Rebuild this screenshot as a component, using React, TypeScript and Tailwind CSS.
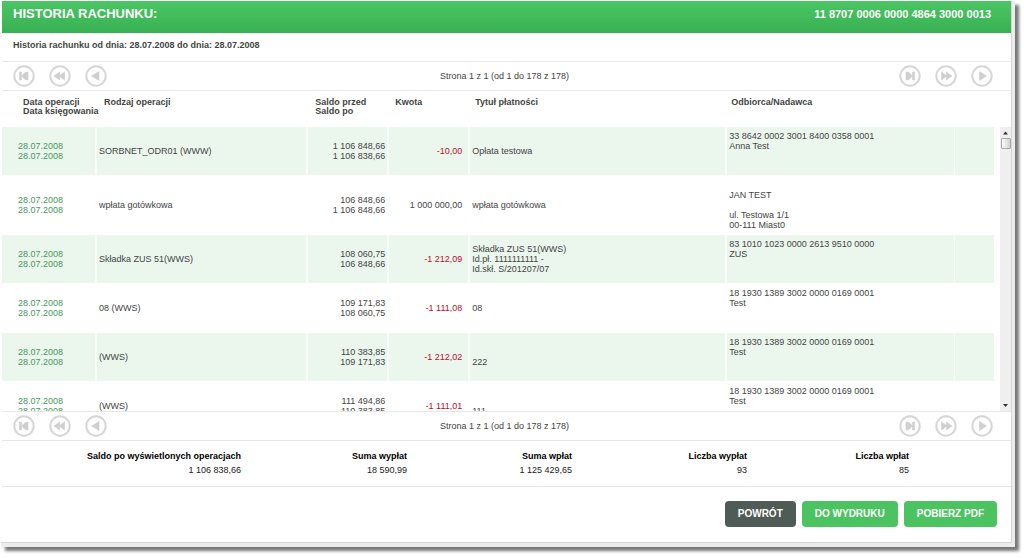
import React from 'react';

interface Operation {
  id: number;
  dates: [string, string];
  type: string;
  balances: [string, string];
  amount: string;
  title: string[];
  party: string[];
}

const operations: Operation[] = [
  {
    id: 1,
    dates: ['28.07.2008', '28.07.2008'],
    type: 'SORBNET_ODR01 (WWW)',
    balances: ['1 106 848,66', '1 106 838,66'],
    amount: '-10,00',
    title: ['Opłata testowa'],
    party: ['33 8642 0002 3001 8400 0358 0001', 'Anna Test'],
  },
  {
    id: 2,
    dates: ['28.07.2008', '28.07.2008'],
    type: 'wpłata gotówkowa',
    balances: ['106 848,66', '1 106 848,66'],
    amount: '1 000 000,00',
    title: ['wpłata gotówkowa'],
    party: ['', 'JAN TEST', '', 'ul. Testowa 1/1', '00-111 Miast0'],
  },
  {
    id: 3,
    dates: ['28.07.2008', '28.07.2008'],
    type: 'Składka ZUS 51(WWS)',
    balances: ['108 060,75', '106 848,66'],
    amount: '-1 212,09',
    title: ['Składka ZUS 51(WWS)', 'Id.pł. 1111111111 -', 'Id.skł. S/201207/07'],
    party: ['83 1010 1023 0000 2613 9510 0000', 'ZUS'],
  },
  {
    id: 4,
    dates: ['28.07.2008', '28.07.2008'],
    type: '08 (WWS)',
    balances: ['109 171,83', '108 060,75'],
    amount: '-1 111,08',
    title: ['08'],
    party: ['18 1930 1389 3002 0000 0169 0001', 'Test'],
  },
  {
    id: 5,
    dates: ['28.07.2008', '28.07.2008'],
    type: '(WWS)',
    balances: ['110 383,85', '109 171,83'],
    amount: '-1 212,02',
    title: ['', '222'],
    party: ['18 1930 1389 3002 0000 0169 0001', 'Test'],
  },
  {
    id: 6,
    dates: ['28.07.2008', '28.07.2008'],
    type: '(WWS)',
    balances: ['111 494,86', '110 383,85'],
    amount: '-1 111,01',
    title: ['', '111'],
    party: ['18 1930 1389 3002 0000 0169 0001', 'Test'],
  },
];

const totals = [
  { label: 'Saldo po wyświetlonych operacjach', value: '1 106 838,66' },
  { label: 'Suma wypłat', value: '18 590,99' },
  { label: 'Suma wpłat', value: '1 125 429,65' },
  { label: 'Liczba wypłat', value: '93' },
  { label: 'Liczba wpłat', value: '85' },
];

// Glyphs inside the 22x22 round pager buttons
const pagerShapes = {
  first: 'M6.500 7h2v8h-2zM8.500 11l3.500-3.500 3-.5v8l-3-.5z',
  rewind: 'M5 11l5.500-4v8zM10 11l5.500-4v8z',
  prev: 'M6.500 11l7.500-4.500v9z',
  last: 'M13.500 7h2v8h-2zM13.500 11l-3.500-3.500-3-.5v8l3-.5z',
  forward: 'M12 11l-5.500-4v8zM17 11l-5.500-4v8z',
  next: 'M15.500 11l-7-4.500v9z',
};

const PagerButton: React.FC<{ shape: keyof typeof pagerShapes; label: string }> = ({ shape, label }) => (
  <button type="button" aria-label={label} className="block cursor-pointer">
    <svg width="22" height="22" viewBox="0 0 22 22">
      <circle cx="11" cy="11" r="9.700" fill="none" stroke="#d6d6d6" strokeWidth="2" />
      <path d={pagerShapes[shape]} fill="#cfcfcf" stroke="#cfcfcf" strokeWidth="0.600" strokeLinejoin="round" />
    </svg>
  </button>
);

const Pager: React.FC = () => (
  <nav className="grid grid-cols-[1fr_auto_1fr] items-center h-7 pl-[11px] pr-[18px]">
    <div className="flex gap-[14px]">
      <PagerButton shape="first" label="Pierwsza strona" />
      <PagerButton shape="rewind" label="Przewiń wstecz" />
      <PagerButton shape="prev" label="Poprzednia strona" />
    </div>
    <span className="pl-[3px]">Strona 1 z 1 (od 1 do 178 z 178)</span>
    <div className="flex gap-[14px] justify-end">
      <PagerButton shape="last" label="Ostatnia strona" />
      <PagerButton shape="forward" label="Przewiń naprzód" />
      <PagerButton shape="next" label="Następna strona" />
    </div>
  </nav>
);

const Lines: React.FC<{ items: string[] }> = ({ items }) => (
  <>
    {items.map((line, i) => (
      <div key={i} className="min-h-[10px]">{line}</div>
    ))}
  </>
);

const OperationRow: React.FC<{ op: Operation }> = ({ op }) => {
  const amountColor = op.amount.startsWith('-') ? 'text-[#c00c2e]' : '';

  return (
    <tr className="h-[49px] odd:bg-[#ebf7ed] whitespace-nowrap *:border-b *:border-b-white *:border-l-white/60">
      <td className="pl-4 text-[#479a5f]"><Lines items={op.dates} /></td>
      <td className="border-l-2 pl-[2px]">{op.type}</td>
      <td className="border-l-2 pr-[2px] text-right"><Lines items={op.balances} /></td>
      <td className={`border-l-2 pr-[6px] text-right ${amountColor}`}>{op.amount}</td>
      <td className="border-l-2 pl-[2px]"><Lines items={op.title} /></td>
      <td className="border-l-2 pl-[2px] py-1 align-top"><Lines items={op.party} /></td>
      <td className="border-l"></td>
    </tr>
  );
};

// Classic desktop scrollbar next to the list
const ScrollRail: React.FC = () => (
  <div className="w-[11px] mt-9 bg-[#f0eff0] flex flex-col items-center">
    <svg width="11" height="11" viewBox="0 0 11 11">
      <path d="M5.500 4.500l2.500 3h-5z" fill="#333" />
    </svg>
    <div className="w-[10px] h-[11px] border border-[#a8a8a8] rounded-[1px] bg-linear-to-r from-white to-[#cfcfcf]"></div>
    <svg width="11" height="11" viewBox="0 0 11 11" className="mt-auto">
      <path d="M5.500 7l2.500-3h-5z" fill="#333" />
    </svg>
  </div>
);

export default function App() {
  return (
    <div className="min-h-screen bg-white pl-[1px] pt-[1px] pr-[9px] pb-[11px] font-['Liberation_Sans',Arial,sans-serif] text-[9px] leading-[10px] text-[#444]">
      <div className="bg-white border-r-3 border-b-4 border-[#ececec] shadow-[4px_4px_3px_#777]">
        <div className="pl-[1px] border-r border-b border-[#d6d6d6]">
          <header className="flex justify-between h-8 pt-[6px] pl-[11px] pr-5 bg-linear-to-b from-[#4bc663] to-[#38b054] text-white font-bold leading-[14px]">
            <h1 className="text-[13px]">HISTORIA RACHUNKU:</h1>
            <span className="text-[11px]">11 8707 0006 0000 4864 3000 0013</span>
          </header>

          <p className="h-7 pt-[7px] pl-[11px] font-bold">
            Historia rachunku od dnia: 28.07.2008 do dnia: 28.07.2008
          </p>

          <div className="border-y border-[#e8e8e8]">
            <Pager />
          </div>

          <div className="flex h-[320px] overflow-hidden">
            <div className="flex-1 mr-[6px] overflow-hidden">
              <table className="w-full table-fixed border-separate border-spacing-0">
                <colgroup>
                  <col className="w-[93px]" />
                  <col className="w-[21.3%]" />
                  <col className="w-[81px]" />
                  <col className="w-[81px]" />
                  <col className="w-[25.9%]" />
                  <col />
                  <col className="w-10" />
                </colgroup>
                <thead>
                  <tr className="h-9 text-left align-top leading-[9px] whitespace-nowrap *:pt-[7px]">
                    <th className="pl-[21px]">Data operacji<br />Data księgowania</th>
                    <th className="pl-[9px]">Rodzaj operacji</th>
                    <th className="pl-[9px]">Saldo przed<br />Saldo po</th>
                    <th className="pl-[8px]">Kwota</th>
                    <th className="pl-[7px]">Tytuł płatności</th>
                    <th className="pl-[6px]">Odbiorca/Nadawca</th>
                    <th></th>
                  </tr>
                </thead>
                <tbody>
                  {operations.map((op) => (
                    <OperationRow key={op.id} op={op} />
                  ))}
                </tbody>
              </table>
            </div>
            <ScrollRail />
          </div>

          <div className="border-y border-[#e8e8e8]">
            <Pager />
          </div>

          <dl className="grid grid-cols-[239fr_166fr_165fr_175fr_162fr_102fr] pt-[10px] pb-[11px] text-right text-[#222] border-b border-[#e8e8e8]">
            {totals.map((total) => (
              <div key={total.label}>
                <dt className="font-bold text-black">{total.label}</dt>
                <dd className="mt-1">{total.value}</dd>
              </div>
            ))}
          </dl>

          <div className="flex justify-end gap-[6px] pt-[14px] pr-[14px] pb-[15px] text-[10px] text-white font-bold">
            <button type="button" className="h-[26px] px-[13px] rounded bg-[#4e5b56] cursor-pointer">POWRÓT</button>
            <button type="button" className="h-[26px] px-[13px] rounded bg-[#4bc360] cursor-pointer">DO WYDRUKU</button>
            <button type="button" className="h-[26px] px-[13px] rounded bg-[#4bc360] cursor-pointer">POBIERZ PDF</button>
          </div>
        </div>
      </div>
    </div>
  );
}
